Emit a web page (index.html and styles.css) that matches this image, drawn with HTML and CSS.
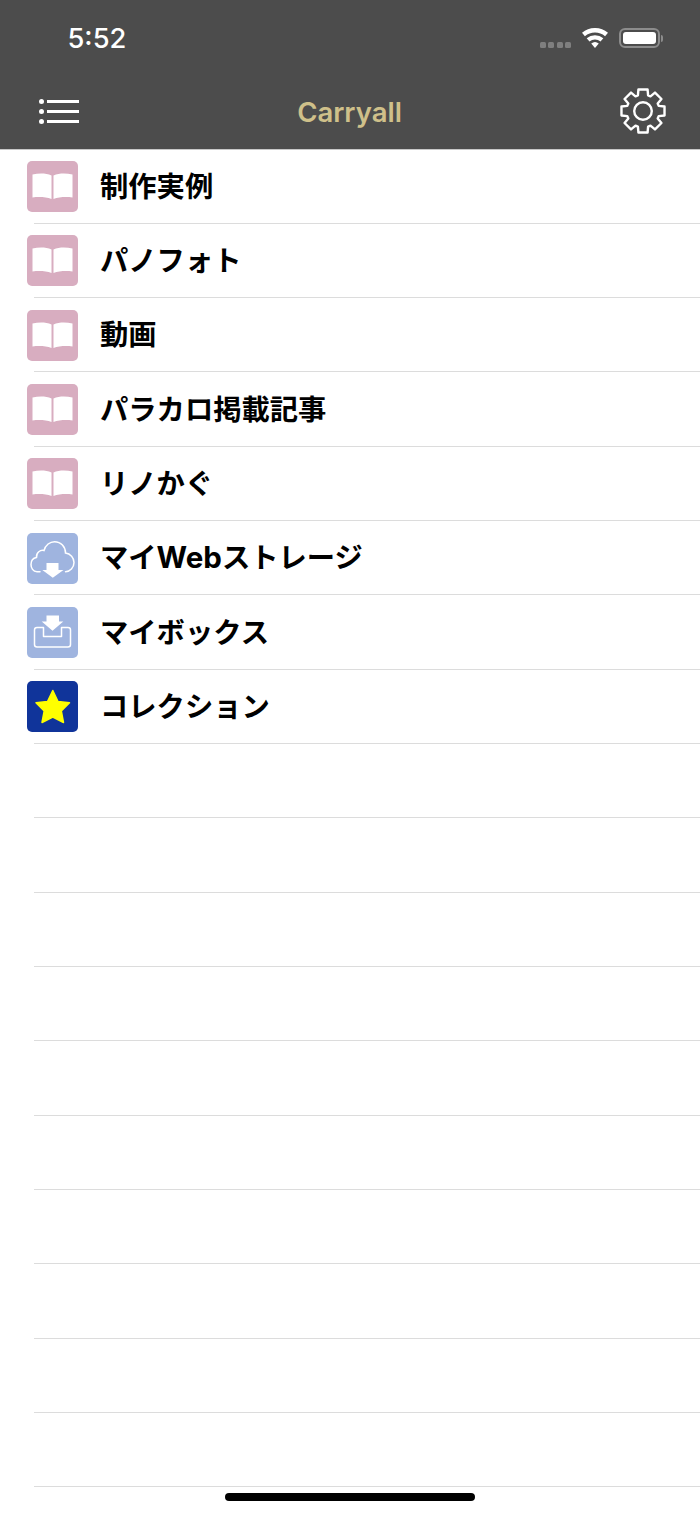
FILE: index.html
```html
<!DOCTYPE html>
<html lang="ja">

<head>
    <meta charset="UTF-8">
    <title>Carryall</title>
    <link rel="stylesheet" href="styles.css">
</head>

<body>
    <svg class="defs" width="0" height="0">
        <symbol id="book" viewBox="0 0 51 51">
            <path fill="#fff" d="M5.500 13.500C12 12 19 12 24.500 14.500V38C19 36 12 35.500 5.500 36.500ZM45.500 13.500C39 12 32 12 26.500 14.500V38C32 36 39 35.500 45.500 36.500Z"/>
        </symbol>
    </svg>

    <div class="top">
        <div class="status">
            <span class="time">5:52</span>
            <div class="status-icons">
                <span class="signal"><i></i><i></i><i></i><i></i></span>
                <svg class="wifi" width="26" height="20" viewBox="0 0 26 20">
                    <path fill="#fff" d="M0 4.800A20 20 0 0 1 26 4.800L23.070 8.220A15.500 15.500 0 0 0 2.930 8.220Z"/>
                    <path fill="#fff" d="M4.680 10.270A12.800 12.800 0 0 1 21.320 10.270L18.530 13.540A8.500 8.500 0 0 0 7.470 13.540Z"/>
                    <path fill="#fff" d="M9.230 15.590A5.800 5.800 0 0 1 16.770 15.590L13 20Z"/>
                </svg>
                <span class="battery"><b></b></span>
                <span class="battery-cap"></span>
            </div>
        </div>
        <div class="nav">
            <svg class="menu-icon" width="40" height="25" viewBox="0 0 40 25">
                <circle cx="2.500" cy="2.500" r="2.500" fill="#fff"/>
                <circle cx="2.500" cy="12.500" r="2.500" fill="#fff"/>
                <circle cx="2.500" cy="22.500" r="2.500" fill="#fff"/>
                <path stroke="#fff" stroke-width="3" d="M8 2.500h32M8 12.500h32M8 22.500h32"/>
            </svg>
            <span class="nav-title">Carryall</span>
            <svg class="gear-icon" width="46" height="46" viewBox="0 0 46 46">
                <circle cx="23" cy="23" r="8.800" fill="none" stroke="#fff" stroke-width="2.400"/>
                <path fill="none" stroke="#fff" stroke-width="2.400" stroke-linejoin="round" d="M17.900 7.310L18.430 1.480H27.570L28.100 7.310L30.490 8.300L34.980 4.550L41.450 11.020L37.700 15.510L38.690 17.900L44.520 18.430V27.570L38.690 28.100L37.700 30.490L41.450 34.980L34.980 41.450L30.490 37.700L28.100 38.690L27.570 44.520H18.430L17.900 38.690L15.510 37.700L11.020 41.450L4.550 34.980L8.300 30.490L7.310 28.100L1.480 27.570V18.430L7.310 17.900L8.300 15.510L4.550 11.020L11.020 4.550L15.510 8.300Z"/>
            </svg>
        </div>
    </div>

    <ul class="list">
        <li><span class="thumb pink"><svg><use href="#book"/></svg></span><span class="label">制作実例</span></li>
        <li><span class="thumb pink"><svg><use href="#book"/></svg></span><span class="label">パノフォト</span></li>
        <li><span class="thumb pink"><svg><use href="#book"/></svg></span><span class="label">動画</span></li>
        <li><span class="thumb pink"><svg><use href="#book"/></svg></span><span class="label">パラカロ掲載記事</span></li>
        <li><span class="thumb pink"><svg><use href="#book"/></svg></span><span class="label">リノかぐ</span></li>
        <li>
            <span class="thumb blue">
                <svg viewBox="0 0 51 51">
                    <path fill="none" stroke="#fff" stroke-width="1.500" stroke-linecap="round" d="M13 38.700H10C6 38.700 4 35 4 31.500C4 27.500 6.500 25 9.500 24.500C9 19.500 13.500 16.500 17 17.500C18.500 12 23 8.700 27.500 8.700C34 8.700 38.500 14 38.500 20C43.500 20.500 47 25 47 29.500C47 34.500 43 38.700 38.500 38.700"/>
                    <path fill="#fff" d="M19.500 30H31.500V37H36.500L25.800 44.700L15.300 37H19.500Z"/>
                </svg>
            </span>
            <span class="label">マイ<span class="latin">Web</span>ストレージ</span>
        </li>
        <li>
            <span class="thumb blue">
                <svg viewBox="0 0 51 51">
                    <path fill="none" stroke="#fff" stroke-width="1.500" stroke-linejoin="round" d="M16.500 20.500H10A2.500 2.500 0 0 0 7.500 23V37.500A2.500 2.500 0 0 0 10 40H41A2.500 2.500 0 0 0 43.500 37.500V23A2.500 2.500 0 0 0 41 20.500H34.500V29.500H16.500Z"/>
                    <path fill="#fff" d="M19.500 8.400H32V14.500H36.300L25.500 23.700L14.700 14.500H19.500Z"/>
                </svg>
            </span>
            <span class="label">マイボックス</span>
        </li>
        <li>
            <span class="thumb navy">
                <svg viewBox="0 0 51 51">
                    <path fill="#ff0" stroke="#ff0" stroke-width="1.500" stroke-linejoin="round" d="M25.800 9.500L31 20.500L42.500 21.800L34.300 30L36.500 41.500L25.800 36L15 41.500L17.200 30L9 21.800L20.500 20.500Z"/>
                </svg>
            </span>
            <span class="label">コレクション</span>
        </li>
        <li></li>
        <li></li>
        <li></li>
        <li></li>
        <li></li>
        <li></li>
        <li></li>
        <li></li>
        <li></li>
        <li></li>
    </ul>

    <div class="home-bar"></div>
</body>

</html>
```

FILE: styles.css
```css
html,body{margin:0;height:100%;}
body {
    position: relative;
    height: 1515px;
    overflow: hidden;
    background-color: #fff;
    font-family: Inter, "Noto Sans CJK JP", sans-serif;
}
ul {
    list-style: none;
    margin: 0;
    padding: 0;
}
.defs{position:absolute;}

.top {
    height: 149px;
    background-color: #4c4c4c;
    border-bottom: 1px solid #c8c8c8;
    color: #fff;
}
.status {
    display: flex;
    justify-content: space-between;
    align-items: center;
    height: 76px;
    padding: 0 37px 0 67.500px;
}
.time {
    font-size: 27.300px;
    font-weight: 500;
}
.status-icons{display:flex;align-items:center;}
.signal{display:flex;gap:2.330px;margin:14px 11px 0 0;}
.signal i{width:6px;height:6px;border-radius:1.500px;background-color:#7f7f7f;}
.wifi{display:block;margin-right:11px;}
.battery {
    display: block;
    box-sizing: border-box;
    width: 41px;
    height: 20px;
    padding: 2px;
    border: 2px solid #8c8c8c;
    border-radius: 6px;
}
.battery b{display:block;height:100%;border-radius:3px;background-color:#fff;}
.battery-cap{width:2px;height:7px;margin-left:1px;border-radius:0 2px 2px 0;background-color:#8c8c8c;}

.nav {
    display: flex;
    justify-content: space-between;
    align-items: center;
    height: 73px;
    padding: 0 34px 0 39px;
}
.nav-title {
    margin-bottom: 2px;
    font-size: 27.500px;
    font-weight: 600;
    color: #cfc08a;
}
.gear-icon{display:block;margin-bottom:4px;}
.menu-icon{display:block;margin-bottom:2px;}

.list li {
    position: relative;
    display: flex;
    align-items: center;
    gap: 22px;
    box-sizing: border-box;
    height: 74.330px;
    padding-left: 27px;
}
.list li:first-child{height:73.800px;}
.list li::after {
    content: "";
    position: absolute;
    left: 34px;
    right: 0;
    bottom: 0;
    height: 1px;
    background-color: #dcdcdc;
}
.thumb{display:block;width:51px;height:51px;border-radius:5px;}
.thumb svg{display:block;width:51px;height:51px;}
.pink{background-color:#d8adc0;}
.blue{background-color:#9fb4df;}
.navy{background-color:#10349a;}
.label {
    margin-bottom: 5px;
    font-size: 28.300px;
    font-weight: 700;
    color: #000;
}
.latin{font-size:29.500px;}

.home-bar {
    position: absolute;
    left: 225px;
    bottom: 14px;
    width: 250px;
    height: 8px;
    border-radius: 4px;
    background-color: #000;
}
```
